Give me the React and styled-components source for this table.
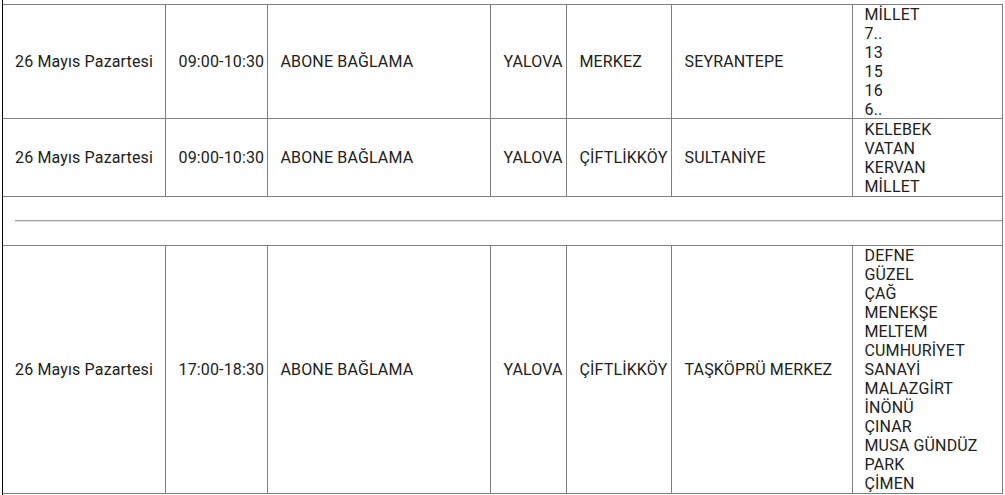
import React from 'react'
import styled, { createGlobalStyle } from 'styled-components'

const GlobalStyle = createGlobalStyle`
  body {
    margin: 0;
    background: #ffffff;
    font-family: Roboto, "Liberation Sans", Arial, sans-serif;
  }
`;

const Page = styled.div`
  margin-left: 2px;
  border-left: 1px solid #000;
  padding: 4px 0 6px 0;
  width: 999px;
`;

const Table = styled.table`
  border-collapse: collapse;
  table-layout: fixed;
  width: 999px;
  font-size: 16px;
  line-height: 19px;
  letter-spacing: 0.15px;
  color: #212121;
`;

const Cell = styled.td`
  border: 1px solid #808080;
  padding: 0 0 0 ${p => p.$pad || 12}px;
  vertical-align: middle;
  white-space: nowrap;
  overflow: hidden;

  &:first-child {
    border-left: none;
  }
`;

const SpacerCell = styled.td`
  border: 1px solid #808080;
  border-left: none;
  height: 48px;
  padding: 0 0 0 12px;
  vertical-align: middle;
`;

const Rule = styled.hr`
  margin: 0;
  border: none;
  border-top: 1px solid #9e9e9e;
  border-bottom: 1px solid #e4e4e4;
  height: 0;
`;

const Streets = styled.div`
  display: flex;
  flex-direction: column;
  margin-top: ${p => p.$top || 0}px;
  margin-bottom: ${p => p.$bottom || 0}px;
`;

const widths = [162, 102, 223, 76, 105, 181, 150];
const pads = [12, 13, 13, 13, 13, 13, 12];

const rows = [
  {
    date: '26 Mayıs Pazartesi',
    time: '09:00-10:30',
    work: 'ABONE BAĞLAMA',
    city: 'YALOVA',
    district: 'MERKEZ',
    hood: 'SEYRANTEPE',
    streets: ['MİLLET', '7..', '13', '15', '16', '6..'],
    bottom: -1,
  },
  {
    date: '26 Mayıs Pazartesi',
    time: '09:00-10:30',
    work: 'ABONE BAĞLAMA',
    city: 'YALOVA',
    district: 'ÇİFTLİKKÖY',
    hood: 'SULTANİYE',
    streets: ['KELEBEK', 'VATAN', 'KERVAN', 'MİLLET'],
    top: 1,
  },
  null,
  {
    date: '26 Mayıs Pazartesi',
    time: '17:00-18:30',
    work: 'ABONE BAĞLAMA',
    city: 'YALOVA',
    district: 'ÇİFTLİKKÖY',
    hood: 'TAŞKÖPRÜ MERKEZ',
    streets: [
      'DEFNE', 'GÜZEL', 'ÇAĞ', 'MENEKŞE', 'MELTEM', 'CUMHURİYET', 'SANAYİ',
      'MALAZGİRT', 'İNÖNÜ', 'ÇINAR', 'MUSA GÜNDÜZ', 'PARK', 'ÇİMEN',
    ],
  },
];

export default function App() {
  return (
    <>
      <GlobalStyle />
      <Page>
        <Table>
          <colgroup>
            {widths.map((w, i) => <col key={i} style={{ width: w }} />)}
          </colgroup>
          <tbody>
            {rows.map((r, i) =>
              r ? (
                <tr key={i}>
                  <Cell $pad={pads[0]}>{r.date}</Cell>
                  <Cell $pad={pads[1]}>{r.time}</Cell>
                  <Cell $pad={pads[2]}>{r.work}</Cell>
                  <Cell $pad={pads[3]}>{r.city}</Cell>
                  <Cell $pad={pads[4]}>{r.district}</Cell>
                  <Cell $pad={pads[5]}>{r.hood}</Cell>
                  <Cell $pad={pads[6]}>
                    <Streets $top={r.top} $bottom={r.bottom}>
                      {r.streets.map((s, j) => <span key={j}>{s}</span>)}
                    </Streets>
                  </Cell>
                </tr>
              ) : (
                <tr key={i}>
                  <SpacerCell colSpan={7}>
                    <Rule />
                  </SpacerCell>
                </tr>
              )
            )}
          </tbody>
        </Table>
      </Page>
    </>
  )
}
